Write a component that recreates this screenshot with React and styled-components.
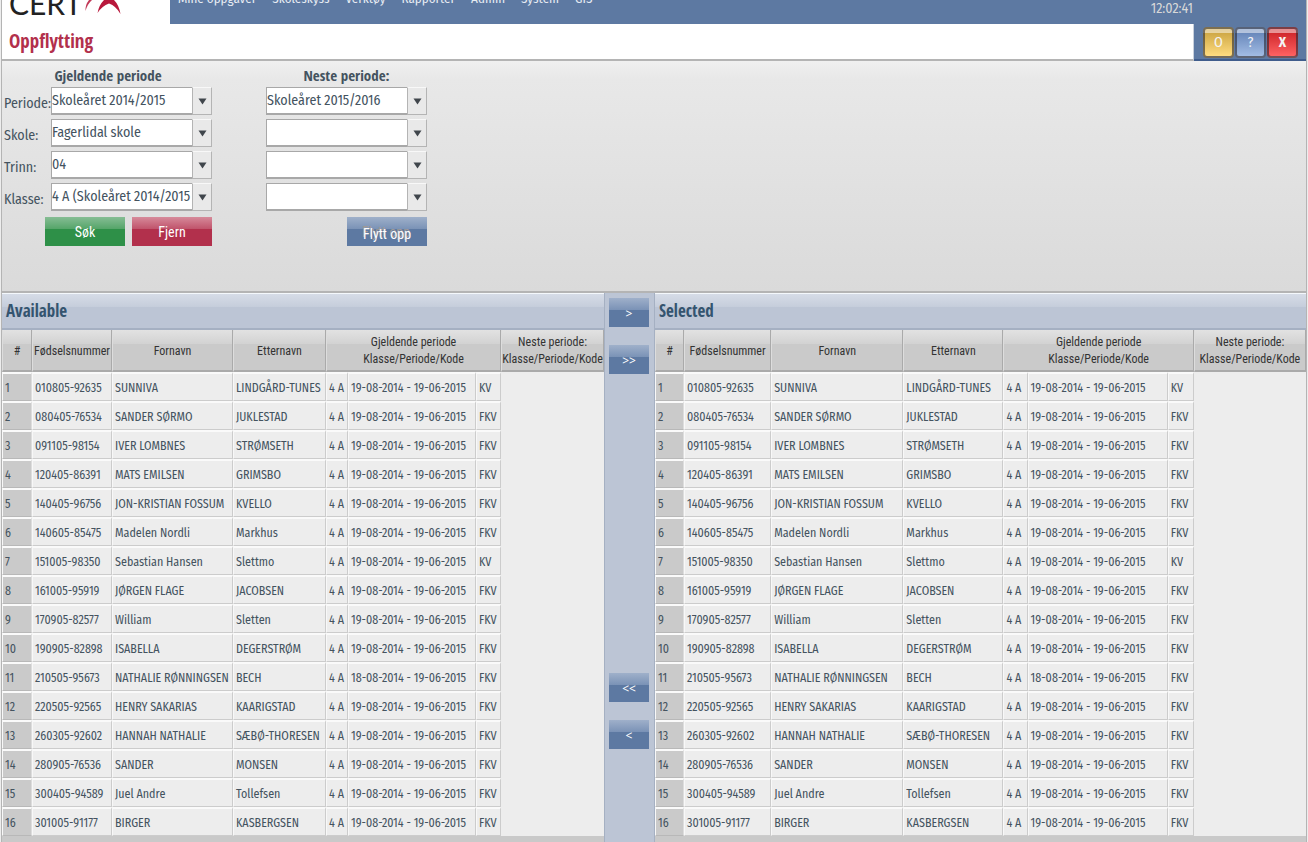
import { useState } from "react";
import styled, { createGlobalStyle } from "styled-components";

const pupils = [
    ["010805-92635", "SUNNIVA", "LINDGÅRD-TUNES", "19-08-2014 - 19-06-2015", "KV"],
    ["080405-76534", "SANDER SØRMO", "JUKLESTAD", "19-08-2014 - 19-06-2015", "FKV"],
    ["091105-98154", "IVER LOMBNES", "STRØMSETH", "19-08-2014 - 19-06-2015", "FKV"],
    ["120405-86391", "MATS EMILSEN", "GRIMSBO", "19-08-2014 - 19-06-2015", "FKV"],
    ["140405-96756", "JON-KRISTIAN FOSSUM", "KVELLO", "19-08-2014 - 19-06-2015", "FKV"],
    ["140605-85475", "Madelen Nordli", "Markhus", "19-08-2014 - 19-06-2015", "FKV"],
    ["151005-98350", "Sebastian Hansen", "Slettmo", "19-08-2014 - 19-06-2015", "KV"],
    ["161005-95919", "JØRGEN FLAGE", "JACOBSEN", "19-08-2014 - 19-06-2015", "FKV"],
    ["170905-82577", "William", "Sletten", "19-08-2014 - 19-06-2015", "FKV"],
    ["190905-82898", "ISABELLA", "DEGERSTRØM", "19-08-2014 - 19-06-2015", "FKV"],
    ["210505-95673", "NATHALIE RØNNINGSEN", "BECH", "18-08-2014 - 19-06-2015", "FKV"],
    ["220505-92565", "HENRY SAKARIAS", "KAARIGSTAD", "19-08-2014 - 19-06-2015", "FKV"],
    ["260305-92602", "HANNAH NATHALIE", "SÆBØ-THORESEN", "19-08-2014 - 19-06-2015", "FKV"],
    ["280905-76536", "SANDER", "MONSEN", "19-08-2014 - 19-06-2015", "FKV"],
    ["300405-94589", "Juel Andre", "Tollefsen", "19-08-2014 - 19-06-2015", "FKV"],
    ["301005-91177", "BIRGER", "KASBERGSEN", "19-08-2014 - 19-06-2015", "FKV"],
];

const menu = ["Mine oppgaver", "Skoleskyss", "Verktøy", "Rapporter", "Admin", "System", "GIS"];

const currentFields = [
    { id: "periode", label: "Periode:", value: "Skoleåret 2014/2015" },
    { id: "skole", label: "Skole:", value: "Fagerlidal skole" },
    { id: "trinn", label: "Trinn:", value: "04" },
    { id: "klasse", label: "Klasse:", value: "4 A (Skoleåret 2014/2015" },
];

const nextFields = [
    { id: "nestePeriode", label: "Neste periode", value: "Skoleåret 2015/2016" },
    { id: "nesteSkole", label: "Neste skole", value: "" },
    { id: "nesteTrinn", label: "Neste trinn", value: "" },
    { id: "nesteKlasse", label: "Neste klasse", value: "" },
];

const availableColumns = [30, 80, 121, 93, 22, 128, 25, 103];
const selectedColumns = [29, 87, 132, 100, 24, 140, 26, 112];

function Combo({ id, value, label }) {
    const [current, setCurrent] = useState(value);

    return (
        <ComboBox>
            <Select id={id} aria-label={label} value={current} onChange={(event) => setCurrent(event.target.value)}>
                <option value={value}>{value}</option>
            </Select>
            <ComboArrow aria-hidden="true">
                <svg width="9" height="7" viewBox="0 0 9 7"><path d="M0.5 0.5H8.5L4.5 6.5Z" fill="#40464c" /></svg>
            </ComboArrow>
        </ComboBox>
    )
}

function PupilPanel({ title, columns }) {
    return (
        <Panel>
            <PanelTitle>{title}</PanelTitle>
            <Table>
                <colgroup>
                    {columns.map((width, index) => <Col key={index} $width={width} />)}
                </colgroup>
                <thead>
                    <tr>
                        <Th>#</Th>
                        <Th>Fødselsnummer</Th>
                        <Th>Fornavn</Th>
                        <Th>Etternavn</Th>
                        <Th colSpan={3}>Gjeldende periode<br />Klasse/Periode/Kode</Th>
                        <Th>Neste periode:<br />Klasse/Periode/Kode</Th>
                    </tr>
                </thead>
                <tbody>
                    {pupils.map(([number, first, last, period, code], index) => (
                        <tr key={number}>
                            <NumberCell>{index + 1}</NumberCell>
                            <Td>{number}</Td>
                            <Td>{first}</Td>
                            <Td>{last}</Td>
                            <Td>4 A</Td>
                            <Td>{period}</Td>
                            <Td>{code}</Td>
                            <EmptyCell />
                        </tr>
                    ))}
                </tbody>
            </Table>
        </Panel>
    )
}

export default function App() {
    return (
        <>
            <GlobalStyle />
            <Page>
                <Header>
                    <Logo>
                        CERT
                        <svg width="40" height="24" viewBox="0 0 40 24">
                            <path d="M5 0H8Q3.500 4 1.500 11Q1 5 5 0Z" fill="#c23a58" />
                            <path d="M13.500 13Q15 5 20 0H30Q35 5 36.500 14Q32 6 25 3.500Q18 6 13.500 13Z" fill="#b8183c" />
                        </svg>
                    </Logo>
                    <Menu>
                        {menu.map((item) => <a href="#" key={item}>{item}</a>)}
                    </Menu>
                    <Clock>12:02:41</Clock>
                </Header>

                <TitleBar>
                    <h1>Oppflytting</h1>
                    <WindowButtons>
                        <WindowButton $top="#c7a03c" $bottom="#ffdc80" aria-label="Oppdater">O</WindowButton>
                        <WindowButton $top="#5f7fb4" $bottom="#a2bce4" aria-label="Hjelp">?</WindowButton>
                        <WindowButton $top="#c91f24" $bottom="#ff6262" $bold aria-label="Lukk">X</WindowButton>
                    </WindowButtons>
                </TitleBar>

                <SearchForm onSubmit={(event) => event.preventDefault()}>
                    <Section>
                        <h2>Gjeldende periode</h2>
                        {currentFields.map((field) => (
                            <Field key={field.id}>
                                <label htmlFor={field.id}>{field.label}</label>
                                <Combo id={field.id} value={field.value} />
                            </Field>
                        ))}
                        <Actions>
                            <Button type="submit" $color="#2e9048" $from="#86bd94" $to="#55a569">Søk</Button>
                            <Button type="button" $color="#b2304c" $from="#d68a9a" $to="#c0536b">Fjern</Button>
                        </Actions>
                    </Section>
                    <Section>
                        <h2>Neste periode:</h2>
                        {nextFields.map((field) => (
                            <Field key={field.id}>
                                <Combo {...field} />
                            </Field>
                        ))}
                        <Actions>
                            <Button type="button" $shadow>Flytt opp</Button>
                        </Actions>
                    </Section>
                </SearchForm>

                <Lists>
                    <PupilPanel title="Available" columns={availableColumns} />
                    <Movers>
                        <div>
                            <MoveButton aria-label="Flytt valgte">&gt;</MoveButton>
                            <MoveButton aria-label="Flytt alle">&gt;&gt;</MoveButton>
                        </div>
                        <div>
                            <MoveButton aria-label="Fjern alle">&lt;&lt;</MoveButton>
                            <MoveButton aria-label="Fjern valgte">&lt;</MoveButton>
                        </div>
                    </Movers>
                    <PupilPanel title="Selected" columns={selectedColumns} />
                </Lists>
            </Page>
        </>
    )
}

const narrow = `"Roboto Condensed", "DejaVu Sans Condensed", sans-serif`;
const heading = `"Open Sans Condensed", "Roboto Condensed", sans-serif`;

const GlobalStyle = createGlobalStyle`
    * {
        box-sizing: border-box;
    }

    body {
        margin: 0;
        background: #ededed;
        color: #44535f;
        font-family: "Fira Sans Condensed", "Roboto Condensed", "DejaVu Sans Condensed", sans-serif;
        font-size: 12px;
    }

    button, select {
        font-family: inherit;
    }

    h1, h2 {
        margin: 0;
        font-family: ${heading};
    }
`;

const Page = styled.div`
    display: flex;
    flex-direction: column;
    min-height: 100vh;
    margin: 0 1px;
    border-left: 1px solid #b4b4b4;
    border-right: 1px solid #b4b4b4;
`;

const Header = styled.header`
    display: flex;
    align-items: flex-end;
    height: 24px;
    background: #5d79a2;
    color: #e6ebf2;
`;

const Logo = styled.div`
    display: flex;
    align-items: flex-end;
    gap: 2px;
    width: 168px;
    height: 24px;
    padding-left: 7px;
    background: #fff;
    color: #222;
    font-family: Lato, sans-serif;
    font-size: 30px;
    line-height: 42px;
`;

const Menu = styled.nav`
    display: flex;
    flex: 1;
    gap: 16px;
    padding: 0 8px 16px;
    font-size: 13px;
    line-height: 18px;

    a {
        color: inherit;
        text-decoration: none;
    }
`;

const Clock = styled.time`
    padding: 0 113px 6px 0;
    color: #d8d8d8;
    font-size: 14px;
    line-height: 18px;
`;

const TitleBar = styled.div`
    display: flex;
    height: 37px;
    background: #5d79a2;

    h1 {
        flex: 1;
        padding-left: 7px;
        background: #fff;
        border-right: 1px solid #c8d0dc;
        border-bottom: 2px solid #b4b4b4;
        color: #b2304c;
        font-size: 19px;
        line-height: 34px;
    }
`;

const WindowButtons = styled.div`
    display: flex;
    gap: 1px;
    padding: 3px 8px 2px 9px;
    border-bottom: 2px solid #3f5c8c;
`;

const WindowButton = styled.button`
    width: 31px;
    height: 31px;
    padding: 0;
    border: 2px solid rgba(40, 40, 50, 0.6);
    border-radius: 4px;
    background: linear-gradient(rgba(255, 255, 255, 0.5) 0 4px, transparent 4px),
        linear-gradient(${(props) => props.$top}, ${(props) => props.$bottom});
    color: #f4f4f4;
    font-size: 14px;
    font-weight: ${(props) => (props.$bold ? "bold" : "normal")};
`;

const SearchForm = styled.form`
    display: flex;
    gap: 54px;
    height: 232px;
    padding: 2px;
    background: linear-gradient(#f0f0f0, #e8e8e8 18px, #dadada);
    border-bottom: 2px solid #b4b4b4;
`;

const Section = styled.section`
    h2 {
        font-size: 15px;
        line-height: 24px;
        text-align: center;
    }
`;

const Field = styled.div`
    display: flex;
    height: 28px;
    margin-bottom: 4px;

    label {
        width: 47px;
        font-size: 14px;
        line-height: 33px;
        white-space: nowrap;
    }
`;

const ComboBox = styled.div`
    position: relative;
    width: 161px;
    height: 28px;
`;

const Select = styled.select`
    width: 100%;
    height: 100%;
    padding: 0 20px 0 0;
    border: 1px solid #a8a8a8;
    border-width: 1px 1px 2px;
    border-radius: 0;
    appearance: none;
    background: #fff;
    color: #44535f;
    font-size: 14px;
`;

const ComboArrow = styled.span`
    position: absolute;
    top: 0;
    right: 0;
    display: flex;
    align-items: center;
    justify-content: center;
    width: 20px;
    height: 28px;
    border: 1px solid #b4b4b4;
    border-top-color: #f8f8f8;
    background: #e9e9e9;
    pointer-events: none;
`;

const Actions = styled.div`
    display: flex;
    justify-content: flex-end;
    gap: 7px;
    padding-top: 2px;
`;

const Button = styled.button`
    width: 80px;
    height: 29px;
    padding: ${(props) => (props.$shadow ? "4px 0 0" : "1px 0 0")};
    border: 0;
    background: linear-gradient(${(props) => props.$from || "#9fb0ca"}, ${(props) => props.$to || "#7a92b6"} 12px, ${(props) => props.$color || "#5d79a2"} 12px);
    color: #fff;
    font-family: ${narrow};
    font-size: 14px;
    text-shadow: ${(props) => (props.$shadow ? "-1px -2px 0 #a09a96" : "none")};
`;

const Lists = styled.main`
    display: grid;
    flex: 1;
    grid-template-columns: 602fr 51px 651fr;
    background: #c9c9c9;
`;

const Panel = styled.section`
    min-width: 0;
`;

const PanelTitle = styled.h2`
    height: 37px;
    padding-left: 4px;
    border-top: 1px solid #f4f8fc;
    border-bottom: 2px solid #a5b0c2;
    background: linear-gradient(#d6dce7, #c5cddb 13px, #bcc5d5 13px);
    color: #34546f;
    font-size: 17px;
    line-height: 34px;
`;

const Table = styled.table`
    width: 100%;
    table-layout: fixed;
    border-collapse: separate;
    border-spacing: 0;
`;

const Col = styled.col`
    width: ${(props) => props.$width}px;
`;

const Th = styled.th`
    height: 42px;
    padding: 2px 0 0;
    border-right: 1px solid #aaa;
    border-bottom: 2px solid #aaa;
    border-left: 1px solid #ddd;
    background: linear-gradient(#e2e2e2, #d2d2d2 14px, #cacaca 14px);
    color: #333;
    font-family: ${narrow};
    font-weight: normal;
    line-height: 17px;
    white-space: nowrap;
`;

const Td = styled.td`
    height: 29px;
    padding: 2px 0 0 2px;
    border: 1px solid #ccc;
    border-top: 2px solid #fafafa;
    border-left-color: #f8f8f8;
    background: #ededed;
    line-height: 24px;
    white-space: nowrap;
`;

const NumberCell = styled(Td)`
    border-right-color: #ddd;
    border-bottom-color: #b8b8b8;
    background: #cacaca;
`;

const EmptyCell = styled.td`
    padding: 0;
    background: #ededed;
`;

const Movers = styled.div`
    display: flex;
    flex-direction: column;
    justify-content: space-between;
    padding: 5px 5px 93px 4px;
    border: solid #a5b0c2;
    border-width: 0 1px;
    background: #bcc5d5;

    div {
        display: grid;
        gap: 18px;
    }
`;

const MoveButton = styled(Button)`
    width: 40px;
    font-family: "Noto Sans", sans-serif;
    font-size: 12px;
`;
